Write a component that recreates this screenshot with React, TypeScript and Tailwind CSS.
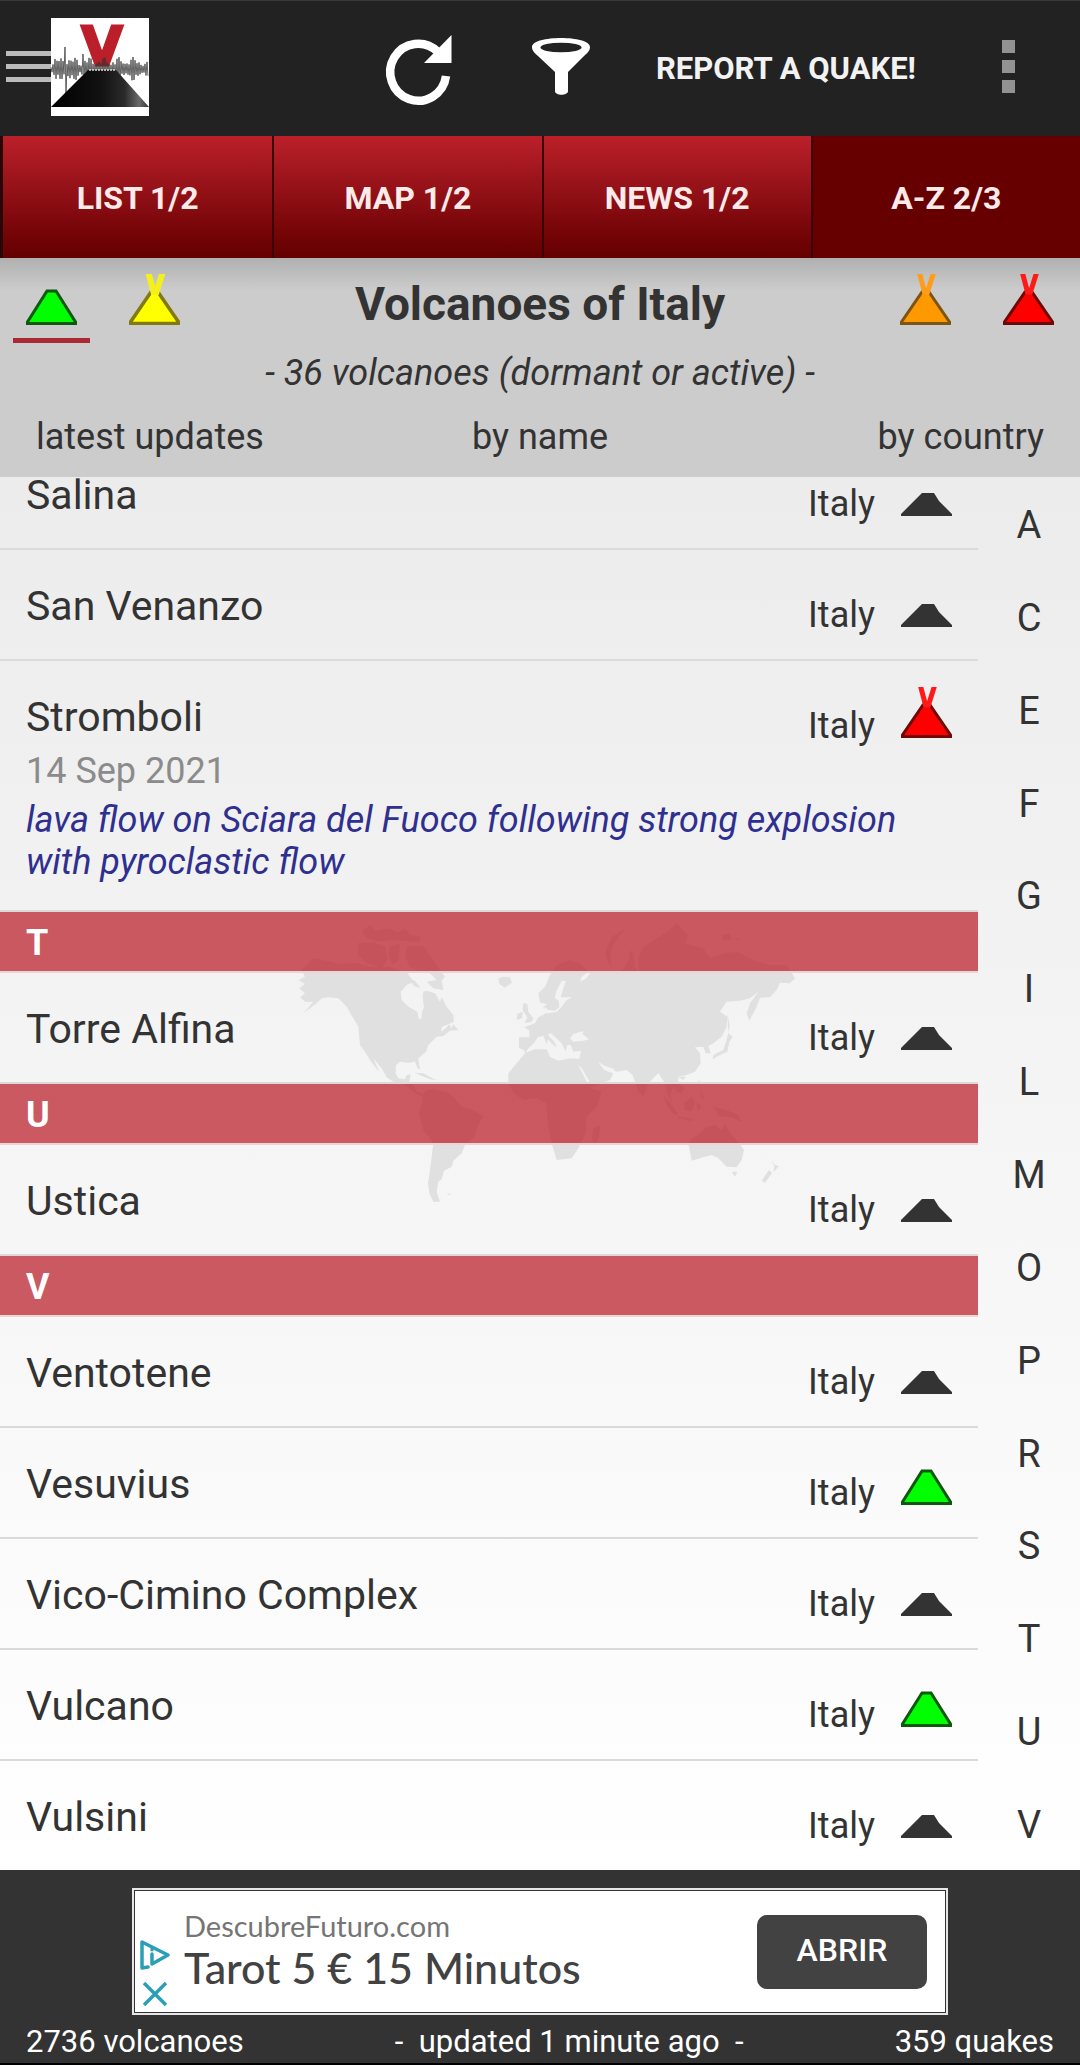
import React from "react";

type Level = "dormant" | "green" | "yellow" | "orange" | "red";

const ROBOTO = "font-['Roboto',sans-serif]";

const levelColors: Record<Level, { fill: string; edge: string }> = {
  dormant: { fill: "#333333", edge: "#333333" },
  green: { fill: "#00ff00", edge: "#0b5a0b" },
  yellow: { fill: "#ffff00", edge: "#807a10" },
  orange: { fill: "#ff9900", edge: "#7d5410" },
  red: { fill: "#ff0000", edge: "#700808" },
};

function VolcanoIcon({ level }: { level: Level }) {
  const { fill, edge } = levelColors[level];
  const erupting = level === "yellow" || level === "orange" || level === "red";
  return (
    <svg viewBox="0 0 51 51" className="h-[51px] w-[51px] shrink-0" aria-hidden="true">
      {level === "dormant" ? (
        <path d="M0 51V49L21 28H33L38 36L51 49V51Z" fill={fill} />
      ) : (
        <path
          d={erupting ? "M1.5 49.5V48L22 18H29L49.5 48V49.5Z" : "M1.5 49.5V48L21 17H30L49.5 48V49.5Z"}
          fill={fill}
          stroke={edge}
          strokeWidth={level === "yellow" ? 3.5 : 3}
        />
      )}
      {erupting && (
        <path
          d="M19.5 -1L24.500 18H27.500L33.500 -1"
          fill="none"
          stroke={level === "yellow" ? "#f3f01e" : level === "orange" ? "#ff9d1a" : "#ff1a1a"}
          strokeWidth={level === "yellow" ? 6 : 5}
        />
      )}
    </svg>
  );
}

const wave = Array.from({ length: 98 }, (_, i) => {
  const envelope = 4 + 8 * Math.abs(Math.sin(i * 0.21)) * (i > 90 || i < 4 ? 0.4 : 1);
  const spike = i === 14 ? 22 : i === 15 ? 24 : i === 32 ? 15 : 0;
  const size = spike || envelope * (0.45 + 0.55 * Math.abs(Math.sin(i * 2.7)));
  return `${i},${(51 + (i % 2 ? size : -size)).toFixed(1)}`;
}).join(" ");

function AppLogo() {
  return (
    <svg viewBox="0 0 98 98" className="h-[98px] w-[98px] shrink-0 overflow-visible bg-white" role="img" aria-label="Volcano logo">
      <defs>
        <linearGradient id="cone" x1="0" x2="1" y1="0" y2="0">
          <stop offset="0" stopColor="#000" />
          <stop offset="0.5" stopColor="#111" />
          <stop offset="0.75" stopColor="#2a2a2a" />
          <stop offset="0.9" stopColor="#6a6a6a" />
          <stop offset="1" stopColor="#333" />
        </linearGradient>
      </defs>
      <text x="51" y="47" textAnchor="middle" fontFamily="DejaVu Sans" fontWeight="700" fontSize="53" fill="#bb1f29" stroke="#bb1f29" strokeWidth="3">
        V
      </text>
      <polyline points={wave} fill="none" stroke="#333" strokeWidth="0.9" strokeOpacity="0.85" />
      <path d="M37 52H65L98 89H0Z" fill="url(#cone)" />
      <path d="M38 52H64" stroke="#ddd" strokeWidth="1.5" strokeDasharray="2 1" />
    </svg>
  );
}

function WorldMap() {
  return (
    <svg viewBox="-30 0 1560 900" className="h-[300px] w-[520px]" aria-hidden="true">
      <g fill="#e0e0e0">
        <path d="M70 145L110 152 150 162 200 158 240 170 300 172 350 185 360 200 372 215 350 225 332 245 335 270 355 290 382 305 386 325 394 328 396 305 402 292 398 262 400 245 410 242 435 250 450 275 455 262 470 290 490 315 492 335 470 345 455 350 454 365 470 352 478 343 484 355 490 343 505 360 480 362 460 378 440 380 430 390 415 405 408 425 385 445 390 478 383 476 375 455 355 458 330 455 318 465 317 490 325 505 345 508 350 495 362 493 358 515 370 525 380 545 400 550 410 540 430 538 470 545 490 560 515 590 550 600 580 618 562 650 555 680 525 705 515 730 490 752 485 770 462 782 455 808 445 815 440 845 450 875 430 875 418 850 414 820 420 780 425 740 430 700 400 660 386 610 395 580 398 560 385 555 365 540 345 525 310 515 290 502 275 475 250 445 268 487 240 450 225 425 210 405 205 350 190 325 170 290 145 265 115 262 95 265 80 280 40 310 70 275 45 275 30 262 45 250 28 235 45 222 25 210 45 200 35 180Z" />
        <path d="M215 65L240 45 258 62 300 55 320 67 345 57 360 75 392 78 388 97 340 92 300 90 270 95 230 85ZM205 98L250 98 285 108 292 150 275 175 230 160 203 135ZM300 107L330 102 325 150 310 165 295 140ZM350 107L400 107 420 135 440 165 465 200 455 212 460 240 430 235 410 215 440 210 420 190 390 185 360 170 345 140Z" />
        <path d="M360 210L375 212 392 235 372 228ZM625 205L640 200 660 202 666 218 645 233 628 222ZM700 280L712 282 715 305 730 325 725 335 703 340 712 322 698 300ZM682 312L698 305 696 325 680 330ZM375 488L400 490 420 502 440 510 420 508 395 497ZM470 850L484 851 478 855Z" />
        <path d="M687 382L718 382 718 362 703 352 735 340 745 322 765 312 760 290 772 282 750 278 745 250 765 230 780 195 800 165 835 150 870 160 895 185 875 200 870 215 890 205 900 190 925 188 950 180 975 190 1000 178 1015 150 1020 120 1030 130 1035 170 1045 185 1045 145 1060 110 1100 85 1140 60 1160 38 1195 75 1185 100 1240 115 1260 145 1300 130 1340 125 1390 150 1440 165 1490 165 1515 205 1500 220 1470 218 1460 240 1440 262 1410 263 1400 290 1378 332 1370 310 1380 280 1405 245 1380 265 1350 272 1310 275 1290 305 1312 320 1310 350 1295 380 1270 400 1255 408 1262 430 1247 430 1240 410 1215 412 1230 430 1232 460 1215 485 1190 495 1165 500 1165 515 1185 535 1175 550 1160 545 1150 530 1140 560 1150 590 1135 560 1125 520 1105 490 1075 520 1060 560 1045 545 1028 495 1010 480 980 485 950 470 945 480 970 490 960 510 900 535 935 545 920 590 890 620 888 670 865 715 845 745 800 750 785 700 775 650 768 580 740 565 700 570 670 550 655 520 655 490 680 460 705 430 702 420 687 415Z" />
        <path d="M1010 55L965 80 945 125 955 160 968 178 960 140 970 105 990 75ZM1295 75L1320 70 1325 90 1300 92ZM1335 85L1350 85 1345 95ZM1315 370L1328 380 1318 395 1312 425 1290 435 1268 448 1270 435 1300 420 1308 395ZM1312 312L1319 345 1315 370ZM1225 508L1232 518 1228 525ZM1230 540L1245 570 1235 565ZM1120 555L1150 590 1165 615 1150 612 1130 585ZM1165 618L1210 628 1205 634 1165 625ZM1180 580L1205 560 1215 580 1205 605 1185 600ZM1220 575L1235 590 1222 605ZM1270 590L1310 600 1345 615 1355 635 1320 620 1290 620ZM1165 500L1188 500 1180 510Z" />
        <path d="M1195 700L1200 690 1230 670 1250 650 1275 645 1295 660 1305 640 1320 670 1345 695 1362 720 1355 750 1340 772 1310 770 1285 745 1265 735 1230 745 1205 752ZM1325 785L1342 785 1335 800ZM1443 750L1455 765 1467 768 1450 787 1453 768ZM1437 780L1446 790 1425 818 1415 812ZM910 655L932 645 925 690 912 705 905 685Z" />
      </g>
      <g fill="#f3f3f3">
        <path d="M757 308L765 290 775 300 795 302 808 290 806 272 795 265 798 245 815 212 828 213 820 235 812 262 845 262 828 272 814 292 800 306 775 310Z" />
        <path d="M716 414L733 398 743 382 760 378 770 402 774 388 790 405 800 412 795 398 773 374 783 370 815 400 827 425 832 405 842 405 850 425 873 422 868 447 840 445 805 452 780 440 770 418 735 418 706 428Z" />
        <path d="M840 385L850 372 880 363 878 373 897 388 880 392 850 395Z" />
        <path d="M865 466L875 474 902 520 892 520ZM925 455L945 468 975 478 960 487 940 478Z" />
      </g>
    </svg>
  );
}

const tabs = ["LIST 1/2", "MAP 1/2", "NEWS 1/2", "A-Z 2/3"];
const letters = ["A", "C", "E", "F", "G", "I", "L", "M", "O", "P", "R", "S", "T", "U", "V"];

type Entry =
  | { section: string }
  | { name: string; level: Level; date?: string; note?: string; divider?: boolean };

const entries: Entry[] = [
  { name: "Salina", level: "dormant" },
  { name: "San Venanzo", level: "dormant" },
  {
    name: "Stromboli",
    level: "red",
    date: "14 Sep 2021",
    note: "lava flow on Sciara del Fuoco following strong explosion with pyroclastic flow",
  },
  { section: "T" },
  { name: "Torre Alfina", level: "dormant" },
  { section: "U" },
  { name: "Ustica", level: "dormant" },
  { section: "V" },
  { name: "Ventotene", level: "dormant" },
  { name: "Vesuvius", level: "green" },
  { name: "Vico-Cimino Complex", level: "dormant" },
  { name: "Vulcano", level: "green" },
  { name: "Vulsini", level: "dormant", divider: false },
];

function Header() {
  return (
    <header className="flex h-[136px] shrink-0 items-center justify-between border-t border-[#3a3a3a] bg-[#222222] pb-1">
      <button aria-label="Open menu" className="flex items-center pl-[6px]">
        <span className="flex w-[45px] flex-col gap-2">
          <span className="h-[5px] bg-[#bbbbbb]" />
          <span className="h-[5px] bg-[#bbbbbb]" />
          <span className="h-[5px] bg-[#bbbbbb]" />
        </span>
        <AppLogo />
      </button>
      <div className="flex items-center">
        <button aria-label="Refresh" className="px-10">
          <svg viewBox="0 0 65 66" className="h-[66px] w-[65px] overflow-visible">
            <path d="M50.500 17.500A28 28.500 0 1 0 59 42" fill="none" stroke="#fff" strokeWidth="8.500" />
            <path d="M64.500 1V29H37Z" fill="#fff" />
          </svg>
        </button>
        <button aria-label="Filter" className="px-10">
          <svg viewBox="0 0 58 57" className="h-[57px] w-[58px]">
            <path d="M0 9C0 -3 58 -3 58 9C58 13 55 15 52 18L36 34V53C36 58 23 58 23 53V34L6 18C3 15 0 13 0 9Z" fill="#fff" />
            <ellipse cx="29" cy="9.500" rx="20.500" ry="4.800" fill="#222" />
          </svg>
        </button>
        <button className="pt-[6px] pr-6 pl-[26px] text-[31px] font-bold text-[#f2f2f2]">REPORT A QUAKE!</button>
        <button aria-label="More options" className="flex flex-col gap-[7px] pr-[65px] pl-[62px]">
          <span className="size-[13px] bg-[#929292]" />
          <span className="size-[13px] bg-[#929292]" />
          <span className="size-[13px] bg-[#929292]" />
        </button>
      </div>
    </header>
  );
}

function TabBar() {
  return (
    <nav className="grid h-[122px] shrink-0 grid-cols-4 bg-[#2a0508] pl-[3px]">
      {tabs.map((tab, i) => (
        <button
          key={tab}
          aria-current={i === 3 ? "page" : undefined}
          className={
            "border-l-2 border-[#3a0508] pt-[2px] text-[32px] font-bold text-[#ffeaea] first:border-l-0 " +
            (i === 3 ? "bg-[#660000]" : "bg-linear-to-b from-[#bb202a] to-[#640000]")
          }
        >
          {tab}
        </button>
      ))}
    </nav>
  );
}

function LevelButton({ level, active = false }: { level: Level; active?: boolean }) {
  return (
    <button
      aria-label={`Show ${level} volcanoes`}
      aria-pressed={active}
      className="flex h-[85px] w-[103px] flex-col items-center justify-between pt-4"
    >
      <VolcanoIcon level={level} />
      {active && <span className="h-[5px] w-[77px] bg-[#a92a33]" />}
    </button>
  );
}

function ListHeading() {
  return (
    <section className="shrink-0 bg-[#cccccc] bg-linear-to-b from-[#b0b0b0] to-[#cccccc] to-[32px] pb-[18px] text-[#333333]">
      <div className="flex items-start justify-between">
        <div className="flex">
          <LevelButton level="green" active />
          <LevelButton level="yellow" />
        </div>
        <h1 className="pt-[18px] text-[46px] leading-[56px] font-bold">Volcanoes of Italy</h1>
        <div className="flex">
          <LevelButton level="orange" />
          <LevelButton level="red" />
        </div>
      </div>
      <p className="mt-2 text-center text-4xl leading-[44px] italic">- 36 volcanoes (dormant or active) -</p>
      <div className="mt-5 grid grid-cols-3 px-9 text-4xl leading-[44px]">
        <button className="text-left">latest updates</button>
        <button className="text-center">by name</button>
        <button className="text-right">by country</button>
      </div>
    </section>
  );
}

function EntryRow({ entry }: { entry: Entry }) {
  if ("section" in entry) {
    return (
      <li className="border-b-2 border-[#ecd3d4]">
        <h2 className="bg-[#bb242f]/75 px-[26px] pt-1 text-4xl leading-[55px] font-bold text-white">{entry.section}</h2>
      </li>
    );
  }
  return (
    <li className={"px-[26px] pb-[27px] " + (entry.divider === false ? "" : "border-b-2 border-[#dadada]")}>
      <div className="flex h-[82px] justify-between">
        <span className="pt-[30px] text-[41px] leading-[52px]">{entry.name}</span>
        <span className="flex items-baseline gap-[26px] pt-[26px] text-4xl leading-[34px]">
          Italy
          <VolcanoIcon level={entry.level} />
        </span>
      </div>
      {entry.date && <p className="text-4xl leading-[56px] text-[#8b8b8b]">{entry.date}</p>}
      {entry.note && <p className="text-4xl leading-[42px] text-[#2f2f8f] italic">{entry.note}</p>}
    </li>
  );
}

function VolcanoList() {
  return (
    <main className="relative flex min-h-0 flex-1 bg-linear-to-b from-[#ececec] to-white text-[#333333]">
      <div className="absolute inset-0 flex justify-center pt-[433px]">
        <WorldMap />
      </div>
      <div className="relative flex flex-1 flex-col justify-end overflow-hidden">
        <ul>
          {entries.map((entry, i) => (
            <EntryRow key={i} entry={entry} />
          ))}
        </ul>
      </div>
      <nav aria-label="Jump to letter" className="relative flex w-[102px] flex-col">
        {letters.map((letter) => (
          <button key={letter} className="flex-1 pt-[3px] text-[38px] leading-none">
            {letter}
          </button>
        ))}
      </nav>
    </main>
  );
}

function AdBanner() {
  return (
    <aside className="mx-[132px] border-2 border-[#e6e6e6] bg-[#333333] p-px">
      <div className="flex h-[121px] items-center bg-white pr-[18px] pl-[5px]">
        <div className="flex w-[44px] flex-col gap-3 pt-[42px]">
          <button aria-label="About this ad">
            <svg viewBox="0 0 30 30" className="size-[30px]" fill="none" stroke="#2b9fb5" strokeWidth="3.5">
              <path d="M8 27L2 28V2L28 15L12 24V14" strokeLinejoin="round" strokeLinecap="round" />
              <path d="M10.500 9.500h3" />
            </svg>
          </button>
          <button aria-label="Close ad">
            <svg viewBox="0 0 30 24" className="h-6 w-[30px]" stroke="#2b9fb5" strokeWidth="3.5">
              <path d="M4 1L26 23M26 1L4 23" />
            </svg>
          </button>
        </div>
        <a href="#ad" className="flex-1 pb-1 font-['Lato',sans-serif]">
          <span className="block text-[29px] leading-[36px] text-[#757575]">DescubreFuturo.com</span>
          <span className="block text-[43px] leading-[48px] font-medium text-[#424242]">Tarot 5 € 15 Minutos</span>
        </a>
        <button className="h-[74px] w-[170px] rounded-[10px] bg-[#424242] pb-1 text-[32px] font-medium text-white">
          ABRIR
        </button>
      </div>
    </aside>
  );
}

export default function App() {
  return (
    <div className={`flex h-screen flex-col ${ROBOTO}`}>
      <Header />
      <TabBar />
      <ListHeading />
      <VolcanoList />
      <footer className="shrink-0 border-b-2 border-black bg-[#333333] pt-[18px]">
        <AdBanner />
        <div className="mt-[6px] flex justify-between px-[26px] text-[31px] leading-[42px] whitespace-pre text-white">
          <span>2736 volcanoes</span>
          <span>{"-  updated 1 minute ago  -"}</span>
          <span>359 quakes</span>
        </div>
      </footer>
    </div>
  );
}
